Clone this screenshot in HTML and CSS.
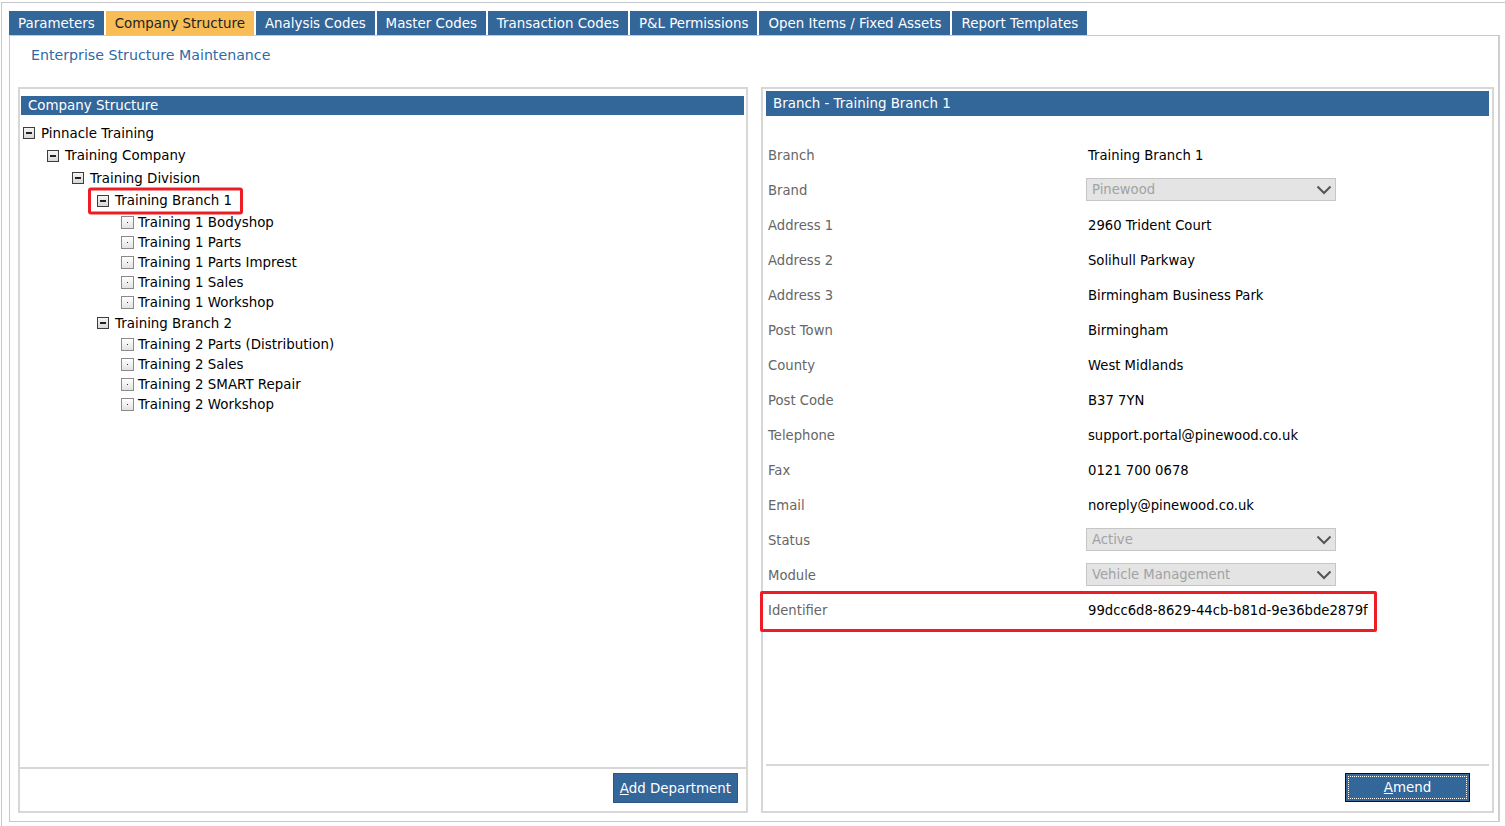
FILE: index.html
```html
<!DOCTYPE html>
<html lang="en">
<head>
<meta charset="utf-8">
<title>Enterprise Structure Maintenance</title>
<link rel="stylesheet" href="styles.css">
</head>
<body>
<div class="page">
  <nav class="tabs">
    <span class="tab">Parameters</span>
    <span class="tab active">Company Structure</span>
    <span class="tab">Analysis Codes</span>
    <span class="tab">Master Codes</span>
    <span class="tab">Transaction Codes</span>
    <span class="tab">P&amp;L Permissions</span>
    <span class="tab">Open Items / Fixed Assets</span>
    <span class="tab">Report Templates</span>
  </nav>
  <main class="frame">
    <h1 class="title">Enterprise Structure Maintenance</h1>
    <div class="panels">
      <section class="panel tree-panel">
        <div class="bar bar-left">Company Structure</div>
        <div class="tree">
          <div class="row node l0"><span class="exp"></span><span class="lbl">Pinnacle Training</span></div>
          <div class="row node l1"><span class="exp"></span><span class="lbl">Training Company</span></div>
          <div class="row node l2"><span class="exp"></span><span class="lbl">Training Division</span></div>
          <div class="row node l3"><span class="mark"><span class="exp"></span><span class="lbl">Training Branch 1</span></span></div>
          <div class="row leaf l4"><span class="dot"></span><span class="lbl">Training 1 Bodyshop</span></div>
          <div class="row leaf l4"><span class="dot"></span><span class="lbl">Training 1 Parts</span></div>
          <div class="row leaf l4"><span class="dot"></span><span class="lbl">Training 1 Parts Imprest</span></div>
          <div class="row leaf l4"><span class="dot"></span><span class="lbl">Training 1 Sales</span></div>
          <div class="row leaf l4"><span class="dot"></span><span class="lbl">Training 1 Workshop</span></div>
          <div class="row node l3 n2"><span class="exp"></span><span class="lbl">Training Branch 2</span></div>
          <div class="row leaf l4"><span class="dot"></span><span class="lbl">Training 2 Parts (Distribution)</span></div>
          <div class="row leaf l4"><span class="dot"></span><span class="lbl">Training 2 Sales</span></div>
          <div class="row leaf l4"><span class="dot"></span><span class="lbl">Training 2 SMART Repair</span></div>
          <div class="row leaf l4"><span class="dot"></span><span class="lbl">Training 2 Workshop</span></div>
        </div>
        <div class="foot foot-left">
          <button class="btn" type="button"><u>A</u>dd Department</button>
        </div>
      </section>
      <section class="panel detail-panel">
        <div class="bar bar-right">Branch - Training Branch 1</div>
        <div class="fields">
          <div class="field"><span class="key">Branch</span><span class="val">Training Branch 1</span></div>
          <div class="field"><span class="key">Brand</span><span class="val"><span class="select">Pinewood<svg class="chev" viewBox="0 0 16 10" width="16" height="10"><path d="M1.5 1.5 L8 8 L14.5 1.5" fill="none" stroke="#555" stroke-width="2"/></svg></span></span></div>
          <div class="field"><span class="key">Address 1</span><span class="val">2960 Trident Court</span></div>
          <div class="field"><span class="key">Address 2</span><span class="val">Solihull Parkway</span></div>
          <div class="field"><span class="key">Address 3</span><span class="val">Birmingham Business Park</span></div>
          <div class="field"><span class="key">Post Town</span><span class="val">Birmingham</span></div>
          <div class="field"><span class="key">County</span><span class="val">West Midlands</span></div>
          <div class="field"><span class="key">Post Code</span><span class="val">B37 7YN</span></div>
          <div class="field"><span class="key">Telephone</span><span class="val">support.portal@pinewood.co.uk</span></div>
          <div class="field"><span class="key">Fax</span><span class="val">0121 700 0678</span></div>
          <div class="field"><span class="key">Email</span><span class="val">noreply@pinewood.co.uk</span></div>
          <div class="field"><span class="key">Status</span><span class="val"><span class="select">Active<svg class="chev" viewBox="0 0 16 10" width="16" height="10"><path d="M1.5 1.5 L8 8 L14.5 1.5" fill="none" stroke="#555" stroke-width="2"/></svg></span></span></div>
          <div class="field"><span class="key">Module</span><span class="val"><span class="select">Vehicle Management<svg class="chev" viewBox="0 0 16 10" width="16" height="10"><path d="M1.5 1.5 L8 8 L14.5 1.5" fill="none" stroke="#555" stroke-width="2"/></svg></span></span></div>
          <div class="field marked"><span class="key">Identifier</span><span class="val">99dcc6d8-8629-44cb-b81d-9e36bde2879f</span></div>
        </div>
        <div class="foot foot-right">
          <button class="btn btn-amend" type="button"><span class="focus"><u>A</u>mend</span></button>
        </div>
      </section>
    </div>
  </main>
</div>
</body>
</html>
```

FILE: styles.css
```css
*, *::before, *::after { box-sizing: border-box; }

html, body {
  margin: 0;
  padding: 0;
  background: #fff;
}

body {
  font-family: "DejaVu Sans", Verdana, sans-serif;
  font-size: 13.4px;
  color: #000;
}

.page {
  margin: 2px 0 0 1px;
  border-top: 1px solid #c8c8c8;
  border-left: 1px solid #c8c8c8;
  padding: 8px 5px 0 7px;
  height: 824px;
}

.tabs {
  display: flex;
  gap: 2px;
  height: 24px;
}

.tab {
  display: flex;
  align-items: center;
  padding: 1px 9px 0;
  background: #336699;
  color: #fff;
  white-space: nowrap;
  line-height: 23px;
}

.tab.active {
  background: #f8bd56;
  color: #222;
}

.frame {
  display: flex;
  flex-direction: column;
  border: 1px solid #c8c8c8;
  border-right: 2px solid #cfcfcf;
  padding: 0 4px 8px 8px;
  height: 787px;
}

.title {
  margin: 9px 0 0 13px;
  font-size: 14.2px;
  font-weight: normal;
  line-height: 20px;
  color: #2f6aa6;
}

.panels {
  margin-top: 22px;
  display: grid;
  grid-template-columns: 730px 733px;
  gap: 13px;
  height: 726px;
}

.panel {
  display: flex;
  flex-direction: column;
  border: 2px solid #d7d7d7;
  min-height: 0;
}

.bar {
  background: #336699;
  color: #fff;
  padding-left: 7px;
  white-space: nowrap;
}

.bar-left {
  margin: 7px 2px 0 1px;
  height: 19px;
  line-height: 19px;
}

.bar-right {
  margin: 2px 3px 0;
  height: 25px;
  line-height: 25px;
}

/* tree */
.tree {
  flex: 1;
  padding: 7px 0 0 3px;
}

.row {
  display: flex;
  align-items: center;
  white-space: nowrap;
}

.node { height: 22.5px; }
.leaf { height: 20px; }

.l0 { padding-left: 0; }
.l1 { padding-left: 24px; }
.l2 { padding-left: 49px; }
.l3 { padding-left: 74px; }
.l4 { padding-left: 98px; }

.exp {
  position: relative;
  display: inline-block;
  width: 12px;
  height: 12px;
  border: 1px solid #3c3c3c;
  background: linear-gradient(#f4f4f4, #d8d8d8);
  margin-right: 6px;
  flex: none;
}

.exp::after {
  content: "";
  position: absolute;
  left: 2px;
  top: 4px;
  width: 6px;
  height: 2px;
  background: #222;
}

.dot {
  position: relative;
  display: inline-block;
  width: 13px;
  height: 13px;
  border: 1px solid #8a8a8a;
  background: linear-gradient(#ffffff, #e2e2e2);
  margin-right: 4px;
  flex: none;
}

.dot::after {
  content: "";
  position: absolute;
  left: 5px;
  top: 5px;
  width: 1px;
  height: 1px;
  background: #333;
}

.mark {
  position: relative;
  display: inline-flex;
  align-items: center;
}

.mark::before {
  content: "";
  position: absolute;
  left: -9px;
  top: 50%;
  transform: translateY(-50%);
  width: 155px;
  height: 27px;
  border: 3px solid #ee1c24;
  border-radius: 3px;
}

/* footers */
.foot {
  display: flex;
  justify-content: flex-end;
  border-top: 2px solid #d7d7d7;
}

.foot-left {
  padding: 4px 8px 8px 0;
}

.foot-right {
  margin: 0 3px;
  padding: 7px 19px 9px 0;
}

.btn {
  font-family: inherit;
  font-size: 13.4px;
  background: #336699;
  color: #fff;
  border: 1px solid #2a5988;
  height: 30px;
  padding: 0 6px;
  cursor: pointer;
}

.btn-amend {
  width: 125px;
  height: 29px;
  border: 1px solid #111;
  padding: 2px;
}

.focus {
  display: block;
  height: 100%;
  border: 1px dotted #fff;
  line-height: 21px;
}

/* fields */
.fields {
  flex: 1;
  padding: 22px 0 0 5px;
  font-size: 13.2px;
}

.field {
  position: relative;
  display: grid;
  grid-template-columns: 320px 1fr;
  align-items: center;
  height: 35px;
}

.key {
  color: #666;
}

.val {
  color: #000;
}

.select {
  display: flex;
  align-items: center;
  justify-content: space-between;
  margin: 0 0 3px -2px;
  width: 250px;
  height: 23px;
  padding: 1px 3px 0 5px;
  background: #e4e4e4;
  border: 1px solid #c6c6c6;
  color: #a2a2a2;
}

.chev { flex: none; }

.marked::after {
  content: "";
  position: absolute;
  left: -8px;
  top: -2px;
  width: 617px;
  height: 41px;
  border: 3px solid #ee1c24;
  border-radius: 2px;
}
```
